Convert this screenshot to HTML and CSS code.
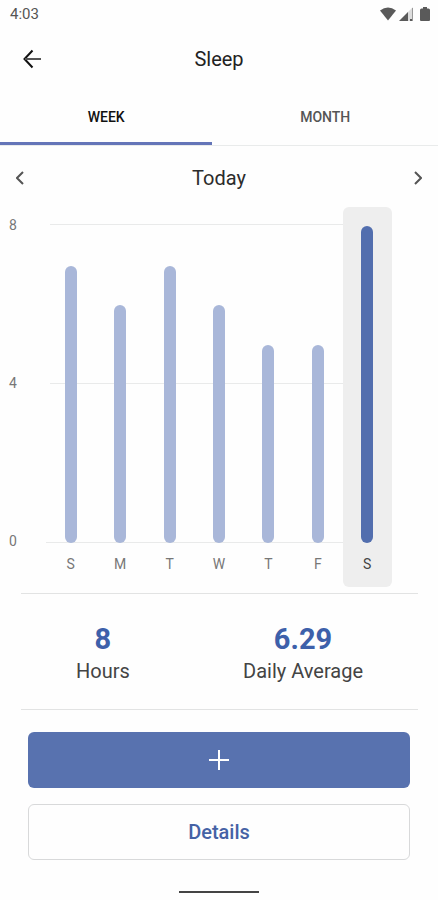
FILE: index.html
```
<!DOCTYPE html>
<html lang="en">
<head>
<meta charset="utf-8">
<meta name="viewport" content="width=device-width, initial-scale=1">
<title>Sleep</title>
<link rel="stylesheet" href="styles.css">
</head>
<body>
<div class="status">
  <span>4:03</span>
  <div class="status-icons">
    <svg width="16" height="14" viewBox="0 0 16 14" aria-hidden="true"><path d="M0 3.5Q8-2.5 16 3.5L8 13.5Z"/></svg>
    <svg width="14" height="14" viewBox="0 0 14 14" aria-hidden="true"><path d="M0 14 14 0V14Z" opacity=".2"/><path d="M0 14 9 5V14ZM11 12H13.5V14H11Z"/><path d="M13.5 1V14" stroke="#999" fill="none"/></svg>
    <svg class="battery" width="10" height="14" viewBox="0 0 10 14" aria-hidden="true"><path d="M3 0H7V1.500H8.500Q10 1.500 10 3V13Q10 14 9 14H1Q0 14 0 13V3Q0 1.500 1.500 1.500H3Z"/></svg>
  </div>
</div>
<header class="header">
  <button class="icon-button" type="button" aria-label="Back"><svg width="20" height="20" viewBox="0 0 20 20" aria-hidden="true"><path d="M10.500 1.500 2.500 10 10.500 18.500"/><path class="shaft" d="M3 10H19"/></svg></button>
  <h1>Sleep</h1>
</header>
<nav class="tabs">
  <button class="tab active" type="button">WEEK</button>
  <button class="tab" type="button">MONTH</button>
</nav>
<main>
  <div class="period">
    <button class="icon-button" type="button" aria-label="Previous week"><svg width="8" height="14" viewBox="0 0 8 14" aria-hidden="true"><path d="M7 1 1 7 7 13"/></svg></button>
    <h2>Today</h2>
    <button class="icon-button" type="button" aria-label="Next week"><svg width="8" height="14" viewBox="0 0 8 14" aria-hidden="true"><path d="M1 1 7 7 1 13"/></svg></button>
  </div>
  <section class="chart" aria-label="Hours of sleep">
    <div class="axis"><span>8</span><span>4</span><span>0</span></div>
    <div class="lines"><i></i><i></i><i></i></div>
    <div class="days">
      <div class="day"><div class="track"><div class="bar" style="height:87.5%"></div></div><span>S</span></div>
      <div class="day"><div class="track"><div class="bar" style="height:75%"></div></div><span>M</span></div>
      <div class="day"><div class="track"><div class="bar" style="height:87.5%"></div></div><span>T</span></div>
      <div class="day"><div class="track"><div class="bar" style="height:75%"></div></div><span>W</span></div>
      <div class="day"><div class="track"><div class="bar" style="height:62.5%"></div></div><span>T</span></div>
      <div class="day"><div class="track"><div class="bar" style="height:62.5%"></div></div><span>F</span></div>
      <div class="day selected"><div class="track"><div class="bar" style="height:100%"></div></div><span>S</span></div>
    </div>
  </section>
  <section class="stats">
    <div class="stat"><strong>8</strong><span>Hours</span></div>
    <div class="stat"><strong>6.29</strong><span>Daily Average</span></div>
  </section>
  <div class="actions">
    <button class="button primary" type="button" aria-label="Add"><svg width="20" height="20" viewBox="0 0 20 20" aria-hidden="true"><path d="M10 0V20M0 10H20"/></svg></button>
    <button class="button" type="button">Details</button>
  </div>
</main>
<div class="home"></div>
</body>
</html>
```
FILE: styles.css
```
* { box-sizing: border-box; }
body {
  margin: 0;
  background: #fefefe;
  color: #2c2c2c;
  font-family: Roboto, sans-serif;
}
button {
  margin: 0;
  padding: 0;
  border: 0;
  background: none;
  color: inherit;
  font: inherit;
  cursor: pointer;
}
h1, h2 { margin: 0; font-weight: 400; }
svg { display: block; }

.status {
  display: flex;
  justify-content: space-between;
  align-items: center;
  height: 28px;
  padding: 0 8px 0 10px;
  color: #555;
  font-size: 15px;
}
.status-icons { display: flex; gap: 3px; fill: #5a5a5a; }
.battery { margin-left: 4px; }

.header {
  display: grid;
  grid-template-columns: 64px 1fr 64px;
  align-items: center;
  height: 60px;
  padding-top: 2px;
}
.header h1 {
  color: #222;
  font-size: 20px;
  text-align: center;
}
.icon-button {
  display: grid;
  place-items: center;
  height: 40px;
}
.icon-button path { fill: none; stroke: #555; stroke-width: 2; }
.header .icon-button path { stroke: #111; }
.header .icon-button .shaft { stroke: #555; }

.tabs {
  display: flex;
  height: 58px;
  border-bottom: 1px solid #e9ebeb;
}
.tab {
  flex: 1;
  padding-top: 3px;
  border-bottom: 3px solid transparent;
  color: #555;
  font-size: 14px;
  font-weight: 500;
}
.tab.active { flex: 0 0 48.5%; border-color: #6475b8; color: #111; }

.period {
  display: grid;
  grid-template-columns: 40px 1fr 40px;
  align-items: center;
  height: 61px;
  padding-top: 3px;
}
.period h2 { font-size: 20px; text-align: center; }

.chart {
  display: grid;
  grid-template-columns: 46px 1fr 46px;
  height: 380px;
}
.axis {
  display: flex;
  flex-direction: column;
  justify-content: space-between;
  margin: 8px 0 36px;
  padding-left: 9px;
  color: #777;
  font-size: 14px;
  line-height: 20px;
}
.lines, .days { grid-row: 1; grid-column: 2; }
.lines {
  display: flex;
  flex-direction: column;
  justify-content: space-between;
  margin: 17px 0 44px;
}
.lines i { height: 1px; margin-left: 4px; background: #e9eaea; }
.lines i:last-child { margin-left: 0; }
.days { display: grid; grid-template-columns: repeat(7, 1fr); }
.day {
  display: flex;
  flex-direction: column;
  align-items: center;
  padding-top: 19px;
  border-radius: 6px;
  color: #777;
  font-size: 14px;
}
.day span { height: 44px; line-height: 42px; }
.track { display: flex; flex: 1; align-items: flex-end; }
.bar { width: 12px; border-radius: 6px; background: #a9b7d9; }
.selected { background: #eee; color: #444; }
.selected .bar { background: #526eae; }

.stats {
  display: flex;
  justify-content: space-between;
  margin: 6px 20px 0 21px;
  padding: 28px 55px 23px;
  border: solid #e2e3e3;
  border-width: 1px 0;
}
.stat { display: flex; flex-direction: column; align-items: center; }
.stat strong { color: #3d60aa; font-size: 29px; line-height: 34px; }
.stat span { color: #444; font-size: 20px; line-height: 30px; }

.actions {
  display: grid;
  gap: 16px;
  padding: 22px 28px 0;
}
.button {
  display: grid;
  place-items: center;
  height: 56px;
  border: 1px solid #d8d9da;
  border-radius: 6px;
  color: #4562a5;
  font-size: 20px;
  font-weight: 500;
}
.primary { border: 0; background: #5872af; }
.primary path { stroke: #fff; stroke-width: 2; }

.home {
  width: 80px;
  height: 2px;
  margin: 31px auto 0;
  background: #444;
}
```
